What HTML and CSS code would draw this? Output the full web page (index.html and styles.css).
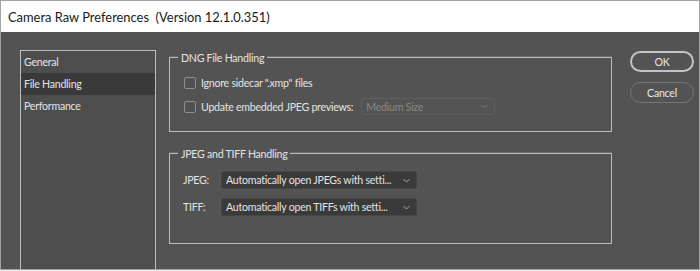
FILE: index.html
```html
<!DOCTYPE html>
<html>
<head>
<meta charset="utf-8">
<link rel="stylesheet" href="styles.css">
</head>
<body>
<div class="window">
  <div class="titlebar">Camera Raw Preferences&nbsp; (Version 12.1.0.351)</div>
  <div class="content">
    <div class="list">
      <div class="item">General</div>
      <div class="item selected">File Handling</div>
      <div class="item">Performance</div>
    </div>
    <div class="main">
      <div class="group dng">
        <span class="legend">DNG File Handling</span>
        <div class="row first">
          <span class="checkbox"></span>
          <span class="label">Ignore sidecar ".xmp" files</span>
        </div>
        <div class="row">
          <span class="checkbox"></span>
          <span class="label">Update embedded JPEG previews:</span>
          <span class="select disabled"><span class="value">Medium Size</span><svg class="chev" width="7" height="5" viewBox="0 0 7 5"><path d="M0.5 1 L3.5 4 L6.5 1" fill="none" stroke="currentColor" stroke-width="1"/></svg></span>
        </div>
      </div>
      <div class="group jt">
        <span class="legend">JPEG and TIFF Handling</span>
        <div class="srow first">
          <span class="flabel">JPEG:</span>
          <span class="select"><span class="value">Automatically open JPEGs with setti...</span><svg class="chev" width="7" height="5" viewBox="0 0 7 5"><path d="M0.5 1 L3.5 4 L6.5 1" fill="none" stroke="currentColor" stroke-width="1"/></svg></span>
        </div>
        <div class="srow">
          <span class="flabel">TIFF:</span>
          <span class="select"><span class="value">Automatically open TIFFs with setti...</span><svg class="chev" width="7" height="5" viewBox="0 0 7 5"><path d="M0.5 1 L3.5 4 L6.5 1" fill="none" stroke="currentColor" stroke-width="1"/></svg></span>
        </div>
      </div>
    </div>
    <div class="buttons">
      <div class="btn ok">OK</div>
      <div class="btn cancel">Cancel</div>
    </div>
  </div>
</div>
</body>
</html>
```
FILE: styles.css
```css
html, body {
  margin: 0;
  padding: 0;
  background: #eeeeee;
  width: 700px;
  height: 271px;
  overflow: hidden;
}
.window {
  width: 700px;
  height: 270px;
  box-sizing: border-box;
  border: 1px solid #a3a3a3;
  background: #535353;
  display: flex;
  flex-direction: column;
  overflow: hidden;
  font-family: Lato, "Liberation Sans", Arial, sans-serif;
  font-size: 10.6px;
  letter-spacing: -0.25px;
  color: #e4e4e4;
}
.titlebar {
  height: 31px;
  flex: none;
  background: #ffffff;
  color: #1a1a1a;
  font-family: Lato, "Noto Sans", sans-serif;
  font-size: 12.9px;
  letter-spacing: 0;
  display: flex;
  align-items: center;
  padding-left: 7px;
}
.content {
  flex: 1;
  display: flex;
  min-height: 0;
  overflow: hidden;
}
.list {
  margin: 18px 0 0 19px;
  width: 136px;
  box-sizing: border-box;
  border: 1px solid #bdbdbd;
  border-bottom: none;
  background: #4d4d4d;
  flex: none;
}
.item {
  height: 22px;
  line-height: 22px;
  padding-left: 3px;
}
.item.selected {
  background: #3a3a3a;
}
.main {
  margin-left: 13px;
  width: 443px;
  flex: none;
  display: flex;
  flex-direction: column;
}
.group {
  border: 1px solid #bcbcbc;
  box-shadow: 0 -1px 0 #6a6a6a;
  display: flex;
  flex-direction: column;
  align-items: flex-start;
}
.group.dng {
  margin-top: 25px;
  padding: 0 0 16px 14px;
}
.group.jt {
  margin-top: 21px;
  padding: 0 0 27px 13px;
}
.legend {
  margin: -7px 0 0 -6px;
  padding: 0 3px;
  background: #535353;
  line-height: 14px;
  height: 14px;
}
.group.jt .legend {
  margin-left: -5px;
}
.row {
  display: flex;
  align-items: center;
  height: 17px;
  margin-top: 7px;
}
.row.first {
  margin-top: 9px;
}
.checkbox {
  width: 12px;
  height: 12px;
  box-sizing: border-box;
  border: 1px solid #8e8e8e;
  border-radius: 2px;
  background: #515151;
  margin-right: 5px;
}
.label {
  margin-right: 8px;
  white-space: nowrap;
}
.select {
  display: flex;
  align-items: center;
  justify-content: space-between;
  box-sizing: border-box;
  height: 18px;
  width: 196px;
  padding: 0 6px 0 4px;
  background: #3a3a3a;
  border: 1px solid #474747;
  border-radius: 2px;
  color: #e4e4e4;
  white-space: nowrap;
  overflow: hidden;
}
.select.disabled {
  width: 134px;
  height: 17px;
  background: #545454;
  border-color: #5f5f5f;
  color: #888888;
}
.chev {
  color: #a8a8a8;
  flex: none;
}
.select.disabled .chev {
  color: #7c7c7c;
}
.srow {
  display: flex;
  align-items: center;
  height: 18px;
  margin-top: 9px;
}
.srow.first {
  margin-top: 10px;
}
.flabel {
  width: 38px;
}
.buttons {
  margin: 19px 0 0 18px;
  display: flex;
  flex-direction: column;
  gap: 10px;
}
.btn {
  width: 64px;
  height: 21px;
  box-sizing: border-box;
  border-radius: 11px;
  display: flex;
  align-items: center;
  justify-content: center;
  color: #e8e8e8;
}
.btn.ok {
  border: 2px solid #c4c4c4;
}
.btn.cancel {
  border: 1.5px solid #767676;
}
```
